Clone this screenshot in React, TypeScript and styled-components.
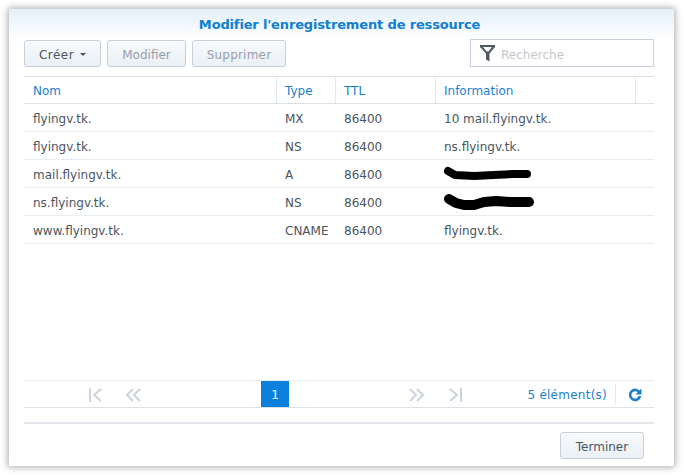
import styled, { createGlobalStyle } from "styled-components";

const GlobalStyle = createGlobalStyle`
  html, body {
    margin: 0;
    padding: 0;
    background: #fff;
    font-family: Tahoma, "DejaVu Sans", "Noto Sans", sans-serif;
  }
`;

const Page = styled.div`
  width: 684px;
  height: 476px;
  padding: 9px 0 0 9px;
  box-sizing: border-box;
  overflow: hidden;
`;

const Win = styled.div`
  width: 665px;
  height: 457px;
  box-sizing: border-box;
  display: flex;
  flex-direction: column;
  padding: 0 20px 7px 15px;
  background: linear-gradient(#e3f0fa 0, #fff 30px);
  box-shadow: 0 0 7px 1px rgba(0, 0, 0, 0.35);
`;

const Title = styled.div`
  height: 31px;
  line-height: 31px;
  text-align: center;
  font-size: 13px;
  font-weight: bold;
  color: #0f7fd4;
  letter-spacing: -0.15px;
  margin-right: -1px;
`;

const Toolbar = styled.div`
  display: flex;
  align-items: flex-start;
  gap: 6px;
  height: 36px;
`;

const Button = styled.div<{ $off?: boolean; $w: number }>`
  width: ${(p) => p.$w}px;
  height: 27px;
  box-sizing: border-box;
  padding-top: 2px;
  display: flex;
  align-items: center;
  justify-content: center;
  gap: 6px;
  font-size: 12px;
  color: ${(p) => (p.$off ? "#96a0ac" : "#4a5561")};
  border: 1px solid #c5d0dc;
  border-radius: 3px;
  background: linear-gradient(#f8fafc, #eaf0f6);
`;

const CreateButton = styled(Button)`
  letter-spacing: 0.5px;
`;

const WideButton = styled(Button)`
  letter-spacing: 0.2px;
`;

const Caret = styled.span`
  width: 0;
  height: 0;
  border-left: 3px solid transparent;
  border-right: 3px solid transparent;
  border-top: 3px solid #4a5561;
`;

const Search = styled.div`
  margin-left: auto;
  width: 184px;
  height: 28px;
  margin-top: -1px;
  box-sizing: border-box;
  border: 1px solid #c5d0dc;
  display: flex;
  align-items: center;
  gap: 5px;
  padding-left: 9px;
  font-size: 12px;
  color: #c4c8cd;
`;

const SearchText = styled.span`
  margin-top: 4px;
`;

const Row = styled.div<{ $head?: boolean }>`
  display: grid;
  grid-template-columns: 253px 59px 100px 200px 18px;
  height: 28px;
  box-sizing: border-box;
  border-bottom: 1px solid ${(p) => (p.$head ? "#d9e1e8" : "#e8edf1")};
  border-top: ${(p) => (p.$head ? "1px solid #d9e1e8" : "none")};
  font-size: 12px;
  color: ${(p) => (p.$head ? "#1a7fd0" : "#4a5561")};
`;

const Cell = styled.div<{ $head?: boolean }>`
  display: flex;
  align-items: center;
  padding: 2px 0 0 8px;
  box-sizing: border-box;
  border-right: ${(p) => (p.$head ? "1px solid #e3e9ee" : "none")};
  white-space: nowrap;

  &:first-child {
    padding-left: 9px;
  }
`;

const Spacer = styled.div`
  flex: 1;
`;

const Pager = styled.div`
  height: 28px;
  box-sizing: border-box;
  border-top: 1px solid #e8edf1;
  border-bottom: 1px solid #d9e1e8;
  display: flex;
  align-items: center;
  font-size: 12px;
  color: #1a7fd0;
`;

const PageIcon = styled.svg`
  width: 16px;
  height: 14px;
  fill: none;
  stroke: #ccd3da;
  stroke-width: 2;
`;

const PagerLeft = styled.div`
  display: flex;
  gap: 21px;
  margin: 2px 0 0 64px;
`;

const PagerRight = styled.div`
  display: flex;
  gap: 22px;
  margin: 2px 0 0 120px;
`;

const Current = styled.div`
  width: 28px;
  height: 26px;
  margin-left: 120px;
  padding-top: 2px;
  box-sizing: border-box;
  display: flex;
  align-items: center;
  justify-content: center;
  background: #0b80dc;
  color: #fff;
  font-size: 12px;
`;

const Count = styled.div`
  margin-left: auto;
  padding: 1px 8px 0 0;
  height: 20px;
  box-sizing: border-box;
  line-height: 20px;
  letter-spacing: 0.25px;
  border-right: 1px solid #e3e9ee;
`;

const Refresh = styled.svg`
  width: 14px;
  height: 14px;
  margin: 2px 12px 0;
  fill: none;
  stroke: #1a7fd0;
  stroke-width: 2.6;
`;

const Footer = styled.div`
  margin-top: 14px;
  border-top: 2px solid #e4e8ec;
  display: flex;
  justify-content: flex-end;
  padding: 8px 10px 0 0;
`;

const rows = [
  ["flyingv.tk.", "MX", "86400", "10 mail.flyingv.tk."],
  ["flyingv.tk.", "NS", "86400", "ns.flyingv.tk."],
  ["mail.flyingv.tk.", "A", "86400", "blot1"],
  ["ns.flyingv.tk.", "NS", "86400", "blot2"],
  ["www.flyingv.tk.", "CNAME", "86400", "flyingv.tk."],
];

function Blot({ thick }: { thick?: boolean }) {
  return (
    <svg width="92" height="18" viewBox="0 0 92 18">
      <path
        d={
          thick
            ? "M5 5 L12 9 L20 11 L30 11 L40 8 L52 7 L66 8 L85 8"
            : "M4 5 L11 9 L30 10 L50 9 L70 8 L83 8"
        }
        fill="none"
        stroke="#000"
        strokeWidth={thick ? 10 : 8}
        strokeLinecap="round"
        strokeLinejoin="round"
      />
    </svg>
  );
}

export default function App() {
  return (
    <Page>
      <GlobalStyle />
      <Win>
        <Title>Modifier l'enregistrement de ressource</Title>
        <Toolbar>
          <CreateButton $w={77}>
            Créer <Caret />
          </CreateButton>
          <Button $off $w={79}>
            Modifier
          </Button>
          <WideButton $off $w={94}>
            Supprimer
          </WideButton>
          <Search>
            <svg width="16" height="17" viewBox="0 0 16 17">
              <path
                d="M0 0h15v2L9.5 8.5V16.5L6 14.5V8.5L0 2z"
                fill="#4f5862"
              />
              <path d="M3 2h9L8.5 6.5h-2z" fill="#fff" />
            </svg>
            <SearchText>Recherche</SearchText>
          </Search>
        </Toolbar>
        <Row $head>
          <Cell $head>Nom</Cell>
          <Cell $head>Type</Cell>
          <Cell $head>TTL</Cell>
          <Cell $head>Information</Cell>
          <Cell />
        </Row>
        {rows.map((r, i) => (
          <Row key={i}>
            <Cell>{r[0]}</Cell>
            <Cell>{r[1]}</Cell>
            <Cell>{r[2]}</Cell>
            <Cell>
              {r[3] === "blot1" ? (
                <Blot />
              ) : r[3] === "blot2" ? (
                <Blot thick />
              ) : (
                r[3]
              )}
            </Cell>
            <Cell />
          </Row>
        ))}
        <Spacer />
        <Pager>
          <PagerLeft>
            <PageIcon viewBox="0 0 16 14">
              <path d="M2 0v14M13 1L6 7l7 6" />
            </PageIcon>
            <PageIcon viewBox="0 0 16 14">
              <path d="M8 1L2 7l6 6M15 1L9 7l6 6" />
            </PageIcon>
          </PagerLeft>
          <Current>1</Current>
          <PagerRight>
            <PageIcon viewBox="0 0 16 14">
              <path d="M1 1l6 6-6 6M8 1l6 6-6 6" />
            </PageIcon>
            <PageIcon viewBox="0 0 16 14">
              <path d="M3 1l7 6-7 6M14 0v14" />
            </PageIcon>
          </PagerRight>
          <Count>5 élément(s)</Count>
          <Refresh viewBox="0 0 14 14">
            <path d="M11.5 4.5A5 5 0 1 0 12 8" />
            <path d="M13.5 0.5v6H7.5z" fill="#1a7fd0" stroke="none" />
          </Refresh>
        </Pager>
        <Footer>
          <Button $w={84}>Terminer</Button>
        </Footer>
      </Win>
    </Page>
  );
}
